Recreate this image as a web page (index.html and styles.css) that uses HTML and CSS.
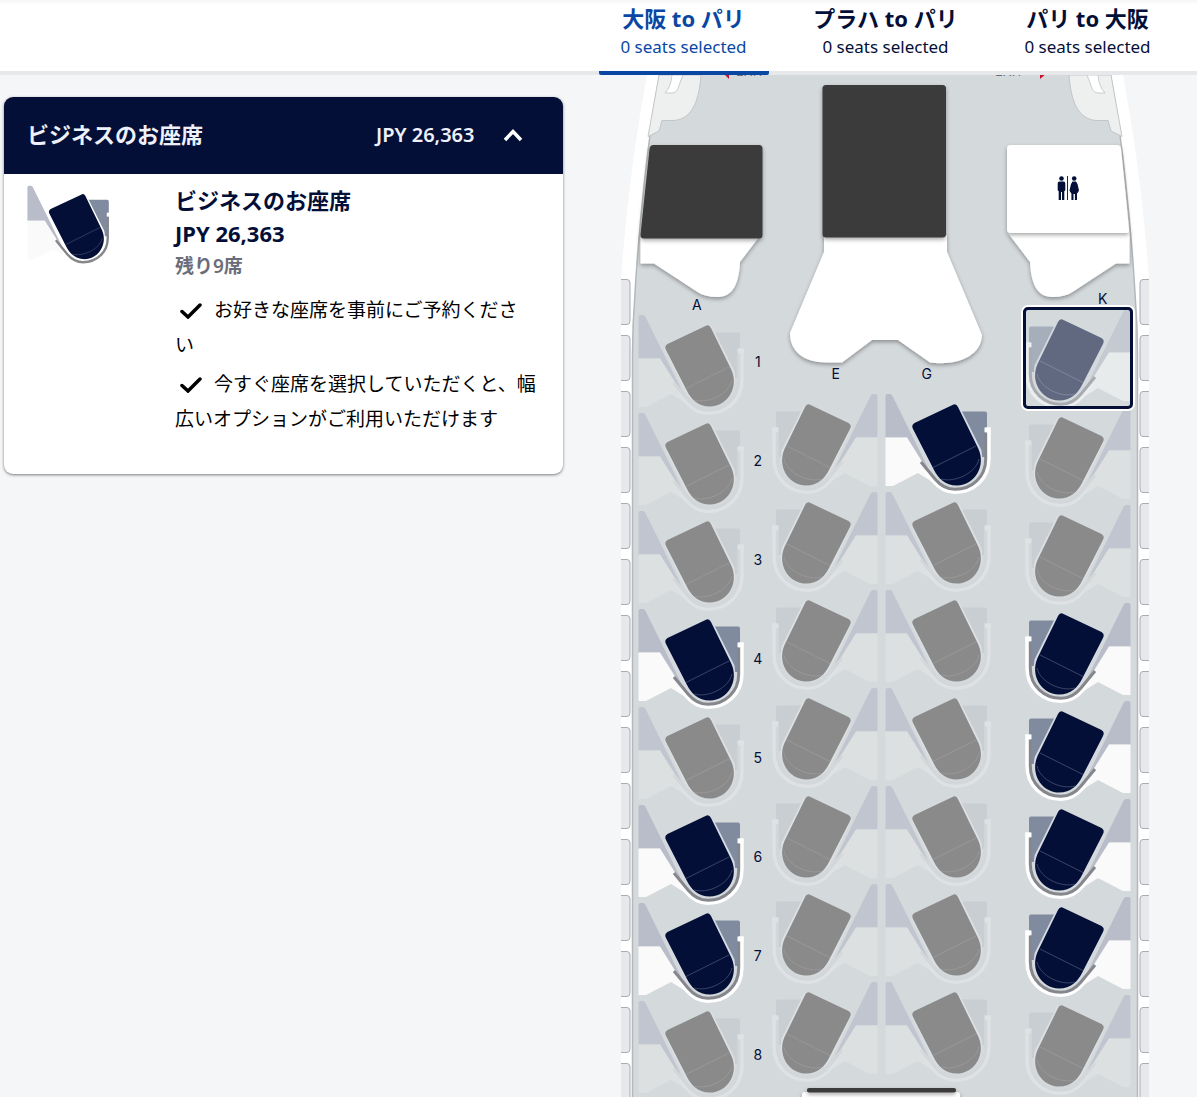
FILE: index.html
```html
<!DOCTYPE html>
<html lang="ja">
<head>
    <meta charset="UTF-8">
    <meta name="viewport" content="width=device-width, initial-scale=1.0">
    <title>座席の選択</title>
    <link rel="stylesheet" href="styles.css">
</head>
<body>
    <!-- Shared seat drawing, coloured from CSS -->
    <svg class="defs" width="0" height="0" aria-hidden="true">
        <symbol id="seat" viewBox="0 0 106 101">
            <path class="s-side" d="M0.5 3Q0.5 1 2.5 1H5Q6.500 1 7.500 3L48 85L22 44.500H0.500Z"/>
            <path class="s-floor" d="M0.500 44.500H22L50 90L57 95L33 80L8 93H0.500Z"/>
            <path class="s-table" d="M76 18.500H100Q102 18.500 102 20.500V64H94Z"/>
            <path class="s-shell" d="M103.200 34.500V66C103.200 86 88 98.500 70 98.500C61 98.500 54 94 49 88L42 79"/>
            <path class="s-shellgap" d="M99.500 34.500H105.500V39.500H99.500Z"/>
            <path class="s-arm" d="M100.700 39.500V66C100.700 84 87 96.300 70 96.300C61 96.300 55 92 50 86L36 69"/>
            <path class="s-rim" d="M28 34L49 77C60 98 101 92 94.500 58L72 13"/>
            <path class="s-body" d="M28 36Q26 32 29.500 30L67.500 12Q71 10 73 14L93.500 56C101 73 90 92 72 92.500C60 92.500 53 85 49 77Z"/>
            <path class="s-line" d="M48 74.500L91 53M56 86C70 90 91 80 94 66"/>
        </symbol>
    </svg>

    <header class="topbar">
        <nav class="tabs">
            <button class="tab active" type="button">
                <span class="tab-route">大阪 to パリ</span>
                <span class="tab-count">0 seats selected</span>
            </button>
            <button class="tab" type="button">
                <span class="tab-route">プラハ to パリ</span>
                <span class="tab-count">0 seats selected</span>
            </button>
            <button class="tab" type="button">
                <span class="tab-route">パリ to 大阪</span>
                <span class="tab-count">0 seats selected</span>
            </button>
        </nav>
    </header>

    <main class="content">
        <section class="side">
            <div class="card">
                <button class="card-header" type="button" aria-expanded="true">
                    <span class="card-title">ビジネスのお座席</span>
                    <span class="card-price">JPY 26,363</span>
                    <svg class="chevron" viewBox="0 0 20 14"><path d="M2 12L10 3.500L18 12"/></svg>
                </button>
                <div class="card-body">
                    <div class="thumb">
                        <svg class="seat-svg" viewBox="0 0 106 101"><use href="#seat"/></svg>
                    </div>
                    <div class="details">
                        <h2>ビジネスのお座席</h2>
                        <p class="price">JPY 26,363</p>
                        <p class="remaining">残り9席</p>
                        <ul class="features">
                            <li><svg class="check" viewBox="0 0 22 16"><path d="M2 8.500L8 14L20 2"/></svg>お好きな座席を事前にご予約くださ<br>い</li>
                            <li><svg class="check" viewBox="0 0 22 16"><path d="M2 8.500L8 14L20 2"/></svg>今すぐ座席を選択していただくと、幅広いオプションがご利用いただけます</li>
                        </ul>
                    </div>
                </div>
            </div>
        </section>

        <section class="map">
            <div class="cabin">
                <svg class="cabin-art" viewBox="0 0 528 1100" aria-hidden="true">
                    <defs>
                        <pattern id="windows" x="0" y="204" width="528" height="56" patternUnits="userSpaceOnUse">
                            <path class="window" d="M-2 0.500H6Q9 0.500 9 4V42Q9 45.500 6 45.500H-2Z"/>
                            <path class="window" d="M530 0.500H522Q519 0.500 519 4V42Q519 45.500 522 45.500H530Z"/>
                        </pattern>
                        <filter id="drop" x="-10%" y="-10%" width="120%" height="125%">
                            <feDropShadow dx="0" dy="2" stdDeviation="2" flood-color="#000" flood-opacity="0.35"/>
                        </filter>
                    </defs>
                    <!-- fuselage -->
                    <path fill="#fff" d="M26 0C15 60 5 130 0 206V1100H528V206C523 130 513 60 502 0Z"/>
                    <path class="floor" d="M39 -2C27 60 18 150 14 218Q11.500 250 11.500 280V1102H516.500V280Q516.500 250 514 218C510 150 501 60 489 -2Z"/>
                    <rect y="204" width="528" height="896" fill="url(#windows)"/>

                    <!-- exit doors -->
                    <g id="door">
                        <path class="door" d="M38 0H80C78 28 70 45 52 45.500H41L38 56L27 61.500Z"/>
                        <path fill="#fff" class="door-slide" d="M51 0H62C57 12 57 18 51 18H44Q50 12 51 0Z"/>
                    </g>
                    <use href="#door" transform="translate(528 0) scale(-1 1)"/>
                    <path fill="#c8102e" d="M102 -2L108 4V-2ZM426 -2L419 4V-2Z"/>
                    <text class="exit" x="115" y="1">EXIT</text>
                    <text class="exit" x="374" y="1">EXIT</text>

                    <!-- galleys and lavatory -->
                    <g filter="url(#drop)">
                        <path fill="#fff" d="M19.500 160V188.500H33L75 216Q83 222 97 222C112 222 118 208 119 187L138 162Z"/>
                        <path fill="#fff" d="M508.500 156V188.500H495L453 216Q445 222 431 222C416 222 410 208 409 187L387 158Z"/>
                        <path fill="#fff" d="M203 160V177L169 258C169 276 182 287.500 206 287.500H221L251 265H277L309 287.500C335 291 360 282 361 260L326 177V160Z"/>
                        <path fill="#fff" d="M181 1100V1020Q181 1017 184 1017H336Q339 1017 339 1020V1100Z"/>
                    </g>
                    <g fill="#3a3a3a" filter="url(#drop)">
                        <path d="M32.500 70H138Q141.500 70 141.500 73.500V160Q141.500 163.500 138 163.500H23Q19 163.500 19.500 159.500L28.500 74Q29 70 32.500 70Z"/>
                        <rect x="201.500" y="10" width="123.500" height="152.500" rx="3.500"/>
                        <rect x="186" y="1013" width="149" height="4.500" rx="2"/>
                        <path fill="#fff" d="M389.500 70H496Q499.500 70 500 73.500L508 154.500Q508.500 158 505 158H389.500Q386 158 386 154.500V73.500Q386 70 389.500 70Z"/>
                    </g>
                    <g fill="#040f37">
                        <circle cx="440.500" cy="103.500" r="2.300"/>
                        <path d="M438.500 106.500H442.500Q444.300 106.500 444.300 108.500V115Q444.300 116 443.300 116V125H441V117H440V125H437.700V116Q436.700 116 436.700 115V108.500Q436.700 106.500 438.500 106.500Z"/>
                        <rect x="446" y="101" width="0.900" height="24"/>
                        <circle cx="453.200" cy="103.500" r="2.300"/>
                        <path d="M451.500 106.500H455L456.500 109L458 115.500Q457.500 117 456 118.500V125H453.900V119H452.500V125H450.400V118.500Q449 117 448.500 115.500L450 109Z"/>
                    </g>
                </svg>

                <div class="seat-grid" id="seatGrid"></div>
            </div>
        </section>
    </main>

    <script>
        // o = open, x = taken, f = focused, first entry is the first row of that column
        const columns = [
            { letter: 'A', first: 1, seats: 'xxxoxoox' },
            { letter: 'E', first: 2, seats: 'xxxxxxx', mirror: true },
            { letter: 'G', first: 2, seats: 'oxxxxxx' },
            { letter: 'K', first: 1, seats: 'fxxoooox', mirror: true }
        ];

        function seatButton(col, state, i) {
            const cls = { o: 'open', x: 'taken', f: 'open focused' }[state];
            return `<button type="button" class="seat ${cls}" aria-label="${col.first + i}${col.letter}" ${state === 'x' ? 'disabled' : ''}>
                <svg class="seat-svg${col.mirror ? ' mirror' : ''}" viewBox="0 0 106 101"><use href="#seat"/></svg>
            </button>`;
        }

        function column(col) {
            const seats = [...col.seats].map((s, i) => seatButton(col, s, i)).join('');
            return `<div class="col col-${col.letter.toLowerCase()}"><span class="letter">${col.letter}</span>${seats}</div>`;
        }

        const html = columns.map(column);
        let numbers = '';
        for (let row = 1; row <= 8; row++) {
            numbers += `<span>${row}</span>`;
        }
        html.splice(1, 0, `<div class="numbers">${numbers}</div>`);
        document.getElementById('seatGrid').innerHTML = html.join('');
    </script>
</body>
</html>
```

FILE: styles.css
```css
:root {
    --navy: #040f37;
    --blue: #0a47a5;
    --page: #f5f6f8;
    --floor: #d4d9dc;
}

* {
    margin: 0;
    padding: 0;
    box-sizing: border-box;
}

body {
    font-family: 'Noto Sans', 'Noto Sans CJK JP', sans-serif;
    background: var(--page);
    color: #000;
    height: 100vh;
    display: flex;
    flex-direction: column;
    overflow: hidden;
}

button {
    font: inherit;
    color: inherit;
    background: none;
    border: none;
    cursor: pointer;
}

.defs {
    position: absolute;
}

/* Tabs */
.topbar {
    background: linear-gradient(#f6f6f6, #fff 5px);
    border-bottom: 4px solid #e7e8ea;
    padding-left: 50%;
    flex: none;
}

.tabs {
    display: flex;
    gap: 32px;
    margin-bottom: -4px;
}

.tab {
    width: 170px;
    padding: 4px 0 10px;
    border-bottom: 4px solid transparent;
    color: var(--navy);
    text-align: center;
}

.tab.active {
    color: var(--blue);
    border-bottom-color: var(--blue);
    border-radius: 2px;
}

.tab-route {
    display: block;
    font-size: 22px;
    font-weight: 700;
    line-height: 29px;
}

.tab-count {
    display: block;
    font-size: 17px;
    line-height: 28px;
}

/* Layout */
.content {
    flex: 1;
    min-height: 0;
    display: flex;
}

.side {
    width: 50%;
    padding: 22px 36px 0 4px;
}

.map {
    width: 50%;
    padding-right: 26px;
    overflow: hidden;
}

/* Price card */
.card {
    background: #fff;
    border-radius: 9px;
    overflow: hidden;
    box-shadow: 0 1px 3px rgba(0, 0, 0, 0.5);
}

.card-header {
    width: 100%;
    display: flex;
    align-items: center;
    background: var(--navy);
    color: #eef0fa;
    padding: 21px 40px 23px 23px;
    line-height: 33px;
    text-align: left;
}

.card-title {
    flex: 1;
    font-size: 22px;
    font-weight: 600;
}

.card-price {
    font-size: 20px;
    font-weight: 600;
    margin-right: 28px;
}

.chevron {
    width: 20px;
    height: 14px;
    fill: none;
    stroke: #fff;
    stroke-width: 3.5;
}

.card-body {
    display: flex;
    padding: 10px 20px 37px 23px;
}

.thumb {
    width: 148px;
    flex: none;
    padding-top: 1px;
}

.thumb .seat-svg {
    width: 85px;
    height: 81px;
    --shell: #fff;
    --rim: #fff;
}

.details {
    flex: 1;
    line-height: 33px;
}

.details h2 {
    font-size: 22px;
    font-weight: 700;
    color: var(--navy);
}

.price {
    font-size: 22px;
    font-weight: 700;
    color: var(--navy);
}

.remaining {
    font-size: 19px;
    font-weight: 600;
    color: #6b6e7a;
}

.features {
    list-style: none;
    margin-top: 10px;
    font-size: 19px;
    line-height: 35px;
}

.features li + li {
    margin-top: 4px;
}

.check {
    width: 22px;
    height: 16px;
    margin: 0 12px 0 5px;
    vertical-align: -2px;
    fill: none;
    stroke: #000;
    stroke-width: 3.5;
    stroke-linecap: round;
}

/* Cabin */
.cabin {
    position: relative;
    width: 528px;
    margin: 0 auto;
    padding: 215px 17px 0;
}

.cabin-art {
    position: absolute;
    top: 0;
    left: 0;
    width: 528px;
    height: 1100px;
}

.floor {
    fill: var(--floor);
    stroke: #b4b8bb;
    stroke-width: 1.5;
}

.window {
    fill: #e6e8ec;
    stroke: #a9acb2;
}

.door {
    fill: #eeefef;
    stroke: #c3c6c8;
}

.door-slide {
    stroke: #c9cbcd;
}

.exit {
    font-family: 'Inter', sans-serif;
    font-size: 13px;
    fill: #6b6e7a;
}

/* Seats */
.seat-grid {
    position: relative;
    display: flex;
    align-items: flex-start;
    color: var(--navy);
    font-family: 'Inter', sans-serif;
    font-size: 14px;
}

.col {
    width: 106px;
    display: flex;
    flex-direction: column;
}

.letter {
    line-height: 18px;
    text-align: center;
}

.col-a {
    padding-top: 6px;
}

.col-a .letter {
    padding-left: 12px;
}

.col-e,
.col-g {
    padding-top: 75px;
}

.col-e .letter,
.col-g .letter {
    margin-bottom: 10px;
}

.col-e .letter {
    padding-left: 22px;
}

.col-g {
    margin: 0 34px 0 7px;
}

.col-g .letter {
    padding-right: 22px;
}

.col-k .letter {
    padding-left: 50px;
}

.numbers {
    width: 28px;
    padding-top: 22px;
    text-align: center;
    line-height: 99px;
}

.numbers span {
    display: block;
}

.seat {
    position: relative;
    height: 98px;
}

.seat-svg {
    display: block;
    width: 106px;
    height: 101px;
    --side: #b9bcc9;
    --base: #fafafa;
    --table: #808b9f;
    --shell: #fff;
    --arm: #85878d;
    --rim: #d5dae3;
    --body: #040f37;
    --line: #3b4568;
}

.mirror {
    transform: scaleX(-1);
}

.taken .seat-svg {
    --side: #c1c5cf;
    --base: #dce0e1;
    --table: #c8ced1;
    --shell: #dfe2e4;
    --arm: #d3d7da;
    --rim: #dde0e3;
    --body: #8a8a8a;
    --line: #999;
}

.focused {
    z-index: 1;
}

.focused .seat-svg {
    opacity: 0.55;
}

.focused::after {
    content: '';
    position: absolute;
    inset: -1px -2px -3px;
    border: 3px solid var(--navy);
    border-radius: 5px;
    box-shadow: 0 0 0 2px #fff;
}

.s-side { fill: var(--side); }
.s-floor { fill: var(--base); }
.s-table { fill: var(--table); }
.s-shellgap { fill: var(--shell); }
.s-body { fill: var(--body); }

.s-shell {
    fill: none;
    stroke: var(--shell);
    stroke-width: 5;
}

.s-arm {
    fill: none;
    stroke: var(--arm);
    stroke-width: 3;
}

.s-rim {
    fill: var(--rim);
    stroke: var(--rim);
    stroke-width: 4;
}

.s-line {
    fill: none;
    stroke: var(--line);
    stroke-width: 1;
}
```
